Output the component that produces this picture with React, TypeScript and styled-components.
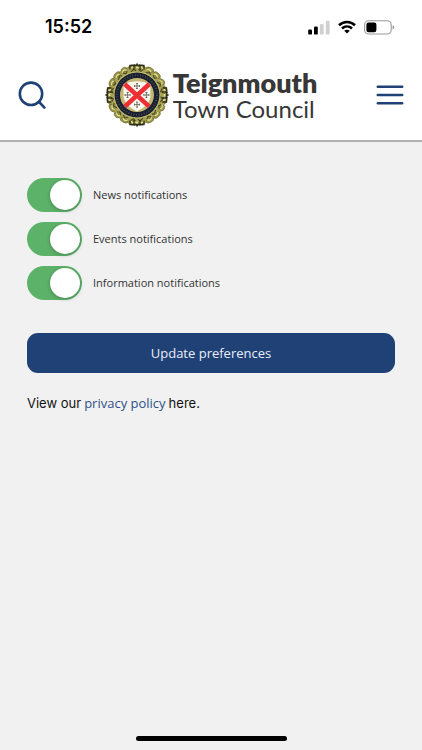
import React from "react";
import styled, { createGlobalStyle } from "styled-components";

const GlobalStyle = createGlobalStyle`
  * { box-sizing: border-box; }
  body { margin: 0; background: #f1f1f1; }
`;

const navy = "#204176";

const Screen = styled.div`
  min-height: 100vh;
  display: flex;
  flex-direction: column;
  background: #f1f1f1;
  font-family: "Open Sans", "Noto Sans", sans-serif;
  color: #333;
`;

const StatusBar = styled.div`
  display: flex;
  align-items: center;
  justify-content: space-between;
  height: 54px;
  padding: 0 27px 0 45px;
  background: #fff;
`;

const Clock = styled.time`
  font: 600 18px/24px Inter, sans-serif;
  color: #000;
`;

const StatusIcons = styled.div`
  display: flex;
  align-items: center;
  gap: 8px;
`;

const Header = styled.header`
  display: flex;
  align-items: center;
  justify-content: space-between;
  height: 88px;
  padding: 0 18px 4px;
  background: #fff;
  border-bottom: 2px solid #b1b1b1;
`;

const IconButton = styled.button`
  display: flex;
  padding: 0;
  border: 0;
  background: none;
  color: ${navy};
`;

const Brand = styled.a`
  display: flex;
  align-items: center;
  gap: 4px;
  color: #373737;
  text-decoration: none;
`;

const BrandText = styled.span`
  display: flex;
  flex-direction: column;
  padding-top: 2px;
  font-family: Lato, sans-serif;
  white-space: nowrap;
`;

const BrandName = styled.span`
  font-size: 27px;
  line-height: 26px;
  font-weight: 800;
`;

const BrandKind = styled.span`
  font-size: 24px;
  line-height: 26px;
`;

const Form = styled.form`
  display: flex;
  flex-direction: column;
  padding: 36px 27px 0;
`;

const Options = styled.div`
  display: flex;
  flex-direction: column;
  gap: 10px;
  margin-bottom: 33px;
`;

const Option = styled.label`
  display: flex;
  align-items: center;
  gap: 11px;
  font-size: 11px;
  line-height: 16px;
`;

const Switch = styled.input`
  appearance: none;
  display: flex;
  width: 55px;
  height: 34px;
  margin: 0;
  padding: 2px;
  border-radius: 17px;
  background: #bbb;

  &::before {
    content: "";
    width: 30px;
    height: 30px;
    border-radius: 50%;
    background: #fff;
    box-shadow: 0 1px 4px rgba(0, 0, 0, 0.25);
  }
  &:checked {
    justify-content: flex-end;
    background: #5db269;
  }
`;

const Submit = styled.button`
  height: 40px;
  border: 0;
  border-radius: 11px;
  background: ${navy};
  color: #e9eef6;
  font: 13px/20px "Open Sans", "Noto Sans", sans-serif;
`;

const Policy = styled.p`
  display: flex;
  gap: 3px;
  margin: 20px 27px 0;
  font: 13px/20px Inter, sans-serif;
  color: #111;
`;

const PolicyLink = styled.a`
  font-family: "Open Sans", "Noto Sans", sans-serif;
  color: #2f4f8b;
  text-decoration: none;
`;

const HomeIndicator = styled.div`
  align-self: center;
  width: 151px;
  height: 5px;
  margin: auto 0 9px;
  border-radius: 3px;
  background: #000;
`;

const Signal = () => (
  <svg width="22" height="15" viewBox="0 0 22 15" aria-hidden="true">
    <rect x="0.2" y="9.4" width="3.8" height="5.2" rx="1.2" />
    <rect x="6" y="6.6" width="3.8" height="8" rx="1.2" />
    <rect x="11.9" y="4" width="3.8" height="10.6" rx="1.2" fill="#d0d0d0" />
    <rect x="17.8" y="0.8" width="3.8" height="13.8" rx="1.2" fill="#d0d0d0" />
  </svg>
);

const Wifi = () => (
  <svg width="18" height="14" viewBox="0 0 18 14" fill="none" stroke="#000" strokeWidth="2.6" aria-hidden="true">
    <path d="M1 5.2C5.6 .9 12.4 .9 17 5.2" />
    <path d="M4 8.5C6.9 5.8 11.1 5.8 14 8.5" />
    <path d="M9 13.6 6.2 10.8Q9 8.6 11.8 10.8Z" fill="#000" stroke="none" />
  </svg>
);

const Battery = () => (
  <svg width="31" height="15" viewBox="0 0 31 15" aria-hidden="true">
    <rect x="0.6" y="0.8" width="26.6" height="13.2" rx="4" fill="none" stroke="#999" strokeWidth="1.1" />
    <rect x="2.4" y="2.5" width="10" height="9.8" rx="2.2" />
    <path d="M28.6 5.2Q30.3 5.8 30.3 7.4T28.6 9.6Z" fill="#999" />
  </svg>
);

const SearchIcon = () => (
  <svg width="28" height="28" viewBox="0 0 28 28" fill="none" stroke="currentColor" strokeWidth="2.6" strokeLinecap="round" aria-hidden="true">
    <circle cx="13" cy="12.8" r="11.2" />
    <path d="m21.2 21 5.2 5.6" />
  </svg>
);

const MenuIcon = () => (
  <svg width="28" height="22" viewBox="0 0 28 22" stroke="currentColor" strokeWidth="2.6" strokeLinecap="round" aria-hidden="true">
    <path d="M1.8 2.7h24.4M1.8 11h24.4M1.8 19.2h24.4" />
  </svg>
);

const ring = (n: number) => Array.from({ length: n }, (_, i) => (i * 360) / n);

const Crest = () => (
  <svg width="64" height="66" viewBox="-32 -33 64 66" aria-hidden="true">
    {ring(4).map((a) => (
      <path key={a} transform={`rotate(${a})`} d="M-2-28-3-31-1-30 0-32.5 1-30 3-31 2-28Z" fill="#171a16" />
    ))}
    <circle r="29.4" fill="#a7a250" />
    {ring(20).map((a, i) => (
      <g key={a} transform={`rotate(${a + 9})`}>
        <ellipse cy="-28.4" rx={i % 3 ? 4 : 3} ry="2.2" fill="#9c9748" stroke="#5b5c30" strokeWidth="0.5" />
        <path d="M-3-26.6Q0-29.6 2-26.6" fill="none" stroke="#e6e294" strokeWidth="1.2" />
        <path d={i % 2 ? "M-2.4-23.8 1-25.8 3-24" : "M-2.6-25.8 0-24 2-26"} fill="none" stroke="#44462a" strokeWidth="1.1" />
      </g>
    ))}
    {ring(4).map((a) => (
      <g key={a} transform={`rotate(${a})`}>
        <path d="M-7-25.5V-29.5H7V-25.5M-3-29V-25M3-29V-25" fill="none" stroke="#2c2e18" strokeWidth="1.3" />
        <path d="M-5-27.6H-4M-1-27.6H1M4-27.6H5" fill="none" stroke="#e2de8a" strokeWidth="1.8" />
      </g>
    ))}
    <circle r="23.2" fill="#cfc87b" />
    <circle r="22.5" fill="#1a2030" />
    <circle r="19.9" fill="none" stroke="#4a4e4c" strokeWidth="2" strokeDasharray="0.9 1.7" />
    <circle r="17" fill="#c2b873" />
    <path d="M-13.4-11Q0-16.5 13.4-11V2Q12.4 10.4 0 16.4-12.4 10.4-13.4 2Z" fill="#fbf7ef" />
    <path d="M-12.4-11 12 11.4M12.4-11-12 11.4" stroke="#ee2d35" strokeWidth="4.6" />
    {[[0, -9], [0, 9.6], [-9.4, 0], [9.4, 0]].map(([x, y]) => (
      <g key={`${x},${y}`} transform={`translate(${x} ${y})`} stroke="#5b5a50" strokeWidth="0.8">
        <path d="M-2.8 0H2.8M0-2.8V2.8M-1-2.5H1M-1 2.5H1M-2.5-1V1M2.5-1V1" />
      </g>
    ))}
  </svg>
);

const topics = ["News", "Events", "Information"];

export default function App() {
  return (
    <Screen>
      <GlobalStyle />
      <StatusBar>
        <Clock>15:52</Clock>
        <StatusIcons>
          <Signal />
          <Wifi />
          <Battery />
        </StatusIcons>
      </StatusBar>
      <Header>
        <IconButton aria-label="Search"><SearchIcon /></IconButton>
        <Brand href="#">
          <Crest />
          <BrandText>
            <BrandName>Teignmouth</BrandName>
            <BrandKind>Town Council</BrandKind>
          </BrandText>
        </Brand>
        <IconButton aria-label="Menu"><MenuIcon /></IconButton>
      </Header>
      <main>
        <Form onSubmit={(e) => e.preventDefault()}>
          <Options>
            {topics.map((topic) => (
              <Option key={topic}>
                <Switch type="checkbox" role="switch" defaultChecked />
                {topic} notifications
              </Option>
            ))}
          </Options>
          <Submit type="submit">Update preferences</Submit>
        </Form>
        <Policy>
          <span>View our</span>
          <PolicyLink href="#">privacy policy</PolicyLink>
          <span>here.</span>
        </Policy>
      </main>
      <HomeIndicator />
    </Screen>
  );
}
